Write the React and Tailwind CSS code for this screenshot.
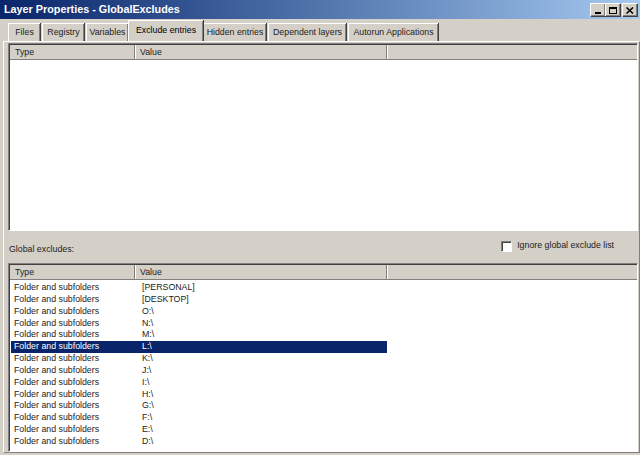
import React from "react";

const rows = [
  "[PERSONAL]", "[DESKTOP]", "O:\\", "N:\\", "M:\\", "L:\\", "K:\\", "J:\\", "I:\\", "H:\\", "G:\\", "F:\\", "E:\\", "D:\\",
];

function Tab({ label, selected, w }) {
  if (selected) {
    return (
      <div
        className="relative z-10 -mx-[2px] h-[21px] self-end bg-[#d4d0c8] border-t border-l border-white shadow-[inset_-1px_0_0_#808080,1px_0_0_#404040] pt-[3px] text-black text-center"
        style={{ width: w }}
      >
        {label}
      </div>
    );
  }
  return (
    <div
      className="h-[18px] self-end bg-[#d4d0c8] border-t border-l border-white shadow-[inset_-1px_0_0_#808080,1px_0_0_#404040] pt-[2px] text-[#222] mr-[2px] text-center whitespace-nowrap"
      style={{ width: w }}
    >
      {label}
    </div>
  );
}

function ListView({ height, children }) {
  return (
    <div
      className="flex flex-col bg-white border-t border-l border-[#808080] border-r border-r-white border-b border-b-white shadow-[inset_1px_1px_0_#404040]"
      style={{ height }}
    >
      <div className="flex h-[15px] ml-[1px] mt-[1px] bg-[#d4d0c8] text-[#222] shrink-0">
        <div className="w-[125px] pl-[5px] leading-[14px] border-r border-[#808080] shadow-[1px_0_0_#fff] shrink-0 border-b">Type</div>
        <div className="w-[252px] pl-[5px] leading-[14px] border-r border-[#808080] shadow-[1px_0_0_#fff] shrink-0 border-b">Value</div>
        <div className="flex-1 border-b border-[#808080]" />
      </div>
      {children}
    </div>
  );
}

export default function App() {
  return (
    <div
      className="w-[640px] h-[455px] bg-[#d4d0c8] overflow-hidden text-[8.8px] flex flex-col"
      style={{ fontFamily: '"Liberation Sans", Arial, sans-serif' }}
    >
      {/* Title bar */}
      <div className="h-[19px] shrink-0 flex items-center justify-between bg-gradient-to-r from-[#0a246a] to-[#a6caf0] pl-[4px] pr-[3px]">
        <span className="text-white font-bold text-[10.8px]">Layer Properties - GlobalExcludes</span>
        <div className="flex items-center">
          {["min", "max", "close"].map((k) => (
            <div
              key={k}
              className={`w-[15px] h-[13px] bg-[#d4d0c8] border-t border-l border-white shadow-[inset_-1px_-1px_0_#808080,1px_1px_0_#404040] flex items-center justify-center ${k === "close" ? "ml-[2px]" : ""}`}
            >
              {k === "min" && <div className="w-[6px] h-[2px] bg-black mt-[6px] -ml-[1px]" />}
              {k === "max" && <div className="w-[8px] h-[7px] border border-black border-t-2" />}
              {k === "close" && (
                <svg width="8" height="7" viewBox="0 0 8 7">
                  <path d="M0.5 0.5 L7 6.5 M7 0.5 L0.5 6.5" stroke="#000" strokeWidth="1.5" />
                </svg>
              )}
            </div>
          ))}
        </div>
      </div>

      {/* Tabs */}
      <div className="h-[22px] shrink-0 flex pl-[8px] items-end">
        <Tab label="Files" w={32} />
        <Tab label="Registry" w={42} />
        <Tab label="Variables" w={42} />
        <Tab label="Exclude entries" w={75} selected />
        <div className="w-[2px]" />
        <Tab label="Hidden entries" w={63} />
        <Tab label="Dependent layers" w={78} />
        <Tab label="Autorun Applications" w={90} />
      </div>

      {/* Tab page */}
      <div className="flex-1 flex flex-col border-t border-l border-white ml-[3px] mr-[1px] mb-[3px] shadow-[1px_1px_0_#808080] pl-[4px] pr-[1px]">
        <div className="mt-[1px]">
          <ListView height={188} />
        </div>
        <div className="h-[32px] flex items-center justify-between pl-[1px] pr-[24px]">
          <span className="text-[#222] mt-[6px]">Global excludes:</span>
          <label className="flex items-center gap-[5px] text-[#222] -mt-[2px]">
            <span className="w-[11px] h-[11px] bg-white border-t border-l border-[#808080] border-r border-b border-r-white border-b-white shadow-[inset_1px_1px_0_#404040]" />
            Ignore global exclude list
          </label>
        </div>
        <ListView height={189}>
          <div className="flex flex-col pt-[2px] ml-[2px]">
            {rows.map((v, i) => {
              const sel = v === "L:\\";
              return (
                <div
                  key={i}
                  className={`flex h-[11.85px] leading-[11.85px] w-[376px] ${sel ? "bg-[#0a246a] text-white" : "text-[#222]"}`}
                >
                  <div className="w-[126px] pl-[3px] shrink-0">Folder and subfolders</div>
                  <div className="pl-[5px]">{v}</div>
                </div>
              );
            })}
          </div>
        </ListView>
      </div>
    </div>
  );
}
